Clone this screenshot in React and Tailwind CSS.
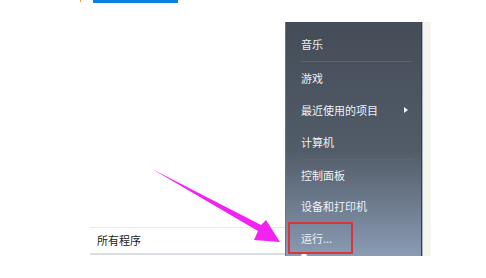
import React from "react";

const font = { fontFamily: '"Noto Sans CJK SC", "Noto Sans", sans-serif' };

function Item({ children, h = "h-[31px]", arrow = false }) {
  return (
    <div className={`${h} flex items-center pl-[15px] pr-[12px] text-[11px] text-[#eef1f4]`}>
      <span className="flex-1 leading-none">{children}</span>
      {arrow && (
        <span className="w-0 h-0 border-y-[3.5px] border-y-transparent border-l-[4px] border-l-[#f2f4f6] mr-[1px]" />
      )}
    </div>
  );
}

function Sep({ h }) {
  return (
    <div className={`${h} flex items-center pl-[15px] pr-[9px]`}>
      <div className="h-px w-full bg-[#5d6672]" />
    </div>
  );
}

export default function App() {
  return (
    <div className="relative w-[486px] h-[278px] bg-white overflow-hidden" style={font}>
      {/* top strip */}
      <div className="h-[3px] flex">
        <div className="ml-[80px] w-[1px] h-[2px] bg-[#f0a040]" />
        <div className="ml-[12px] w-[85px] h-[3px] bg-[#0a80e0]" />
      </div>

      {/* main */}
      <div className="mt-[19px] flex h-[234px]">
        <div className="w-[285px] flex flex-col justify-end pl-[90px] pb-[1px]">
          <div className="h-[28px] border-t border-t-[#e6e9ee] border-b-2 border-b-[#d9dee6] flex items-center pl-[7px] text-[11px] text-[#222]">
            所有程序
          </div>
        </div>

        <div className="relative w-[137px] border-l border-l-[#6d747d] border-r border-r-[#35404e] bg-linear-to-b from-[#444c57] via-[#525c69] via-55% to-[#8a9bb3] pt-[7px]">
          <Item>音乐</Item>
          <Sep h="h-[3px]" />
          <Item>游戏</Item>
          <Item h="h-[32px]" arrow>最近使用的项目</Item>
          <Item h="h-[32px]">计算机</Item>
          <Sep h="h-[2px]" />
          <Item>控制面板</Item>
          <Item>设备和打印机</Item>
          <div className="ml-[2px] w-[65px] h-[32px] border-2 border-[#d9353d] flex items-center pl-[11px] text-[11px] text-[#eef1f4] leading-none">
            运行...
          </div>
          <div className="absolute left-[15px] bottom-0 w-[6px] h-[2px] rounded-t-full bg-white" />
        </div>

        <div className="w-[9px] bg-[#f4f4ee] border-l border-l-[#a9b2bd]" />
      </div>

      {/* arrow overlay */}
      <svg className="absolute left-0 top-0" width="486" height="278" viewBox="0 0 486 278">
        <polygon
          points="152,169 261,225 266,220 280,242 254,240 258,231"
          fill="#f222f2"
        />
      </svg>
    </div>
  );
}
